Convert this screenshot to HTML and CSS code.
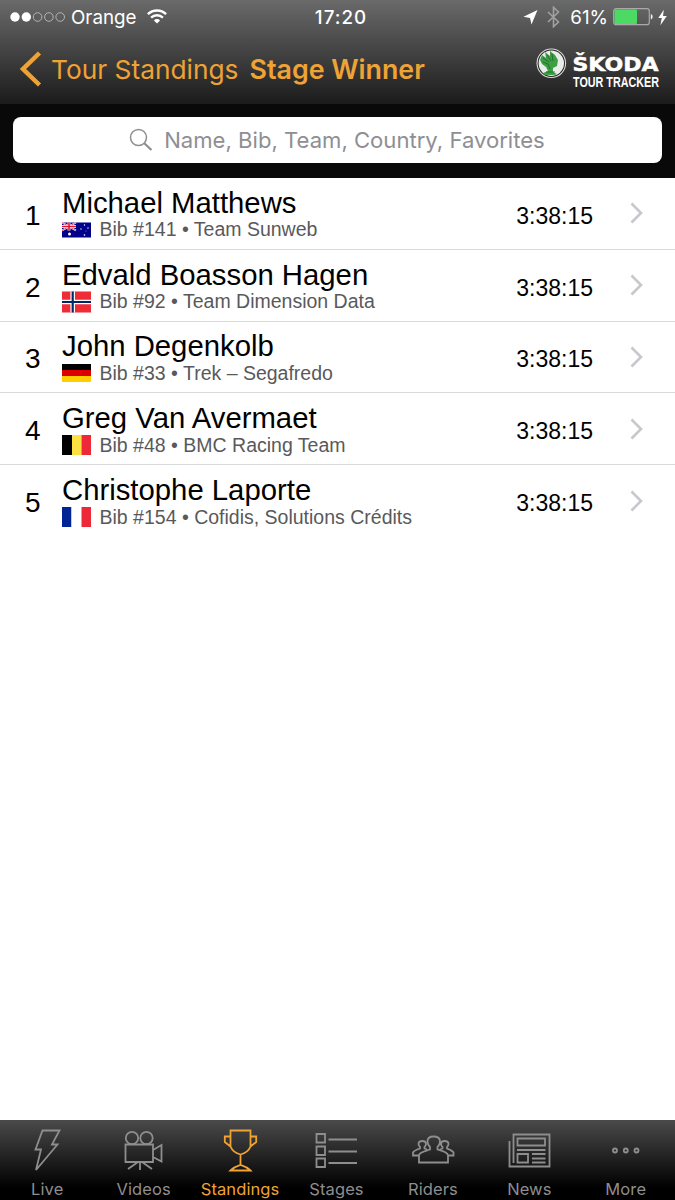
FILE: index.html
```html
<!DOCTYPE html>
<html lang="en">
<head>
    <meta charset="UTF-8">
    <meta name="viewport" content="width=device-width, initial-scale=1.0">
    <title>Stage Winner</title>
    <link rel="stylesheet" href="styles.css">
</head>
<body>
    <header>
        <div class="status-bar">
            <div class="carrier">
                <svg class="signal" width="56" height="12" viewBox="0 0 56 12">
                    <circle cx="5" cy="6" r="4.7" fill="#fff"/>
                    <circle cx="16.3" cy="6" r="4.7" fill="#fff"/>
                    <g fill="none" stroke="#bbb" stroke-width="0.9">
                        <circle cx="27.6" cy="6" r="4.3"/>
                        <circle cx="38.9" cy="6" r="4.3"/>
                        <circle cx="50.2" cy="6" r="4.3"/>
                    </g>
                </svg>
                <span>Orange</span>
                <svg class="wifi" width="20" height="15" viewBox="0 0 20 15">
                    <g fill="none" stroke="#fff" stroke-width="2.4">
                        <path d="M0.9 5.2A13 13 0 0 1 19.1 5.2"/>
                        <path d="M4.1 8.7A8.4 8.4 0 0 1 15.9 8.7"/>
                    </g>
                    <path d="M6.9 11.4A4.4 4.4 0 0 1 13.1 11.4L10 14.6z" fill="#fff"/>
                </svg>
            </div>
            <div class="clock">17:20</div>
            <div class="indicators">
                <svg width="15" height="15" viewBox="0 0 15 15"><path d="M14.5 0L8.5 14.5 7 8 .5 6.8z" fill="#fff"/></svg>
                <svg class="bluetooth" width="13" height="22" viewBox="0 0 13 22"><path d="M1 6l10.500 10L6.500 20.700V1.300L11.500 6 1 16" fill="none" stroke="#a0a0a0" stroke-width="1.6"/></svg>
                <span>61%</span>
                <svg class="battery" width="41" height="18" viewBox="0 0 41 18">
                    <rect x=".7" y=".7" width="35.6" height="16" rx="2.5" fill="none" stroke="#aaa" stroke-width="1.2"/>
                    <rect x="1.5" y="1.5" width="22.5" height="14.4" rx="1" fill="#4cd964"/>
                    <path d="M37.8 6a3 3 0 0 1 0 5.6z" fill="#eee"/>
                </svg>
                <svg class="charge" width="9" height="17" viewBox="0 0 9 17"><path d="M5.8.7L.3 9h3.5L2.4 16.2 8.8 7H5z" fill="#fff"/></svg>
            </div>
        </div>
        <nav class="nav-bar">
            <svg class="back" width="22" height="36" viewBox="0 0 22 36"><path d="M19.500 2L3 18l16.500 16" fill="none" stroke="#efa335" stroke-width="4.5"/></svg>
            <a class="back-title">Tour Standings</a>
            <h1>Stage Winner</h1>
            <svg class="logo" width="126" height="46" viewBox="0 0 126 46">
                <circle cx="15.3" cy="18.2" r="14.8" fill="#ddd"/>
                <circle cx="15.3" cy="18.2" r="13.7" fill="#222"/>
                <circle cx="15.3" cy="18.2" r="12.7" fill="#e9ece8"/>
                <path d="M4 15L6 10l4 3-1-6 5 4V6l5 4 3 5-1 6-4 2v4l4 2-3 1H9l-2-2 5-2-2-4-4-3z" fill="#3d9e44"/>
                <path d="M7 13l6 4M11 10l4 6M16 9l1 7M7 17l5 2 2 5M10 27h9" fill="none" stroke="#1f6a2b" stroke-width=".9"/>
                <text class="brand" x="36.5" y="25.5" textLength="86" lengthAdjust="spacingAndGlyphs">ŠKODA</text>
                <text class="brand-sub" transform="translate(37 42) scale(1 1.35)" textLength="86" lengthAdjust="spacingAndGlyphs">TOUR TRACKER</text>
            </svg>
        </nav>
    </header>

    <div class="search">
        <div class="search-box">
            <svg width="24" height="24" viewBox="0 0 24 24" fill="none" stroke="#8e8e93"><circle cx="9.5" cy="9.5" r="8" stroke-width="1.5"/><path d="M15 15l7.500 7" stroke-width="2.2"/></svg>
            <span>Name, Bib, Team, Country, Favorites</span>
        </div>
    </div>

    <ul class="riders">
        <li>
            <span class="rank">1</span>
            <div class="info">
                <div class="name">Michael Matthews</div>
                <div class="team">
                    <svg width="29" height="20" viewBox="0 0 29 20">
                        <rect y="2.5" width="29" height="15" fill="#00008b"/>
                        <path d="M0 2.500l14 8M14 2.500l-14 8" stroke="#fff" stroke-width="1.8"/>
                        <path d="M0 2.500l14 8M14 2.500l-14 8" stroke="#e8112d" stroke-width=".7"/>
                        <path d="M7 2.500v8M0 6.500h14" stroke="#fff" stroke-width="2.8"/>
                        <path d="M7 2.500v8M0 6.500h14" stroke="#e8112d" stroke-width="1.6"/>
                        <g fill="#fff"><circle cx="7.5" cy="14" r="1.5"/><circle cx="22.5" cy="5" r=".7"/><circle cx="19" cy="9" r=".7"/><circle cx="26" cy="8" r=".7"/><circle cx="22.5" cy="15" r=".8"/><circle cx="24" cy="11" r=".4"/></g>
                    </svg>
                    <span>Bib #141 • Team Sunweb</span>
                </div>
            </div>
            <span class="time">3:38:15</span>
            <svg class="chevron" width="14" height="22" viewBox="0 0 14 22"><path d="M1.500 1.500L11 11l-9.500 9.500"/></svg>
        </li>
        <li>
            <span class="rank">2</span>
            <div class="info">
                <div class="name">Edvald Boasson Hagen</div>
                <div class="team">
                    <svg width="29" height="22" viewBox="0 0 29 22">
                        <rect y=".5" width="29" height="21" fill="#ef2b36"/>
                        <path d="M10.700.5v21M0 11h29" stroke="#fff" stroke-width="4.6"/>
                        <path d="M10.700.5v21M0 11h29" stroke="#002868" stroke-width="2.2"/>
                    </svg>
                    <span>Bib #92 • Team Dimension Data</span>
                </div>
            </div>
            <span class="time">3:38:15</span>
            <svg class="chevron" width="14" height="22" viewBox="0 0 14 22"><path d="M1.500 1.500L11 11l-9.500 9.500"/></svg>
        </li>
        <li>
            <span class="rank">3</span>
            <div class="info">
                <div class="name">John Degenkolb</div>
                <div class="team">
                    <svg width="29" height="18" viewBox="0 0 29 18">
                        <rect width="29" height="6" fill="#000"/>
                        <rect y="6" width="29" height="6" fill="#d00"/>
                        <rect y="12" width="29" height="6" fill="#ffce00"/>
                    </svg>
                    <span>Bib #33 • Trek – Segafredo</span>
                </div>
            </div>
            <span class="time">3:38:15</span>
            <svg class="chevron" width="14" height="22" viewBox="0 0 14 22"><path d="M1.500 1.500L11 11l-9.500 9.500"/></svg>
        </li>
        <li>
            <span class="rank">4</span>
            <div class="info">
                <div class="name">Greg Van Avermaet</div>
                <div class="team">
                    <svg width="29" height="20" viewBox="0 0 29 20">
                        <rect width="10" height="20" fill="#000"/>
                        <rect x="10" width="9.5" height="20" fill="#fae042"/>
                        <rect x="19.5" width="9.5" height="20" fill="#ed2939"/>
                    </svg>
                    <span>Bib #48 • BMC Racing Team</span>
                </div>
            </div>
            <span class="time">3:38:15</span>
            <svg class="chevron" width="14" height="22" viewBox="0 0 14 22"><path d="M1.500 1.500L11 11l-9.500 9.500"/></svg>
        </li>
        <li>
            <span class="rank">5</span>
            <div class="info">
                <div class="name">Christophe Laporte</div>
                <div class="team">
                    <svg width="29" height="20" viewBox="0 0 29 20">
                        <rect width="9.5" height="20" fill="#002395"/>
                        <rect x="9.5" width="10" height="20" fill="#fff"/>
                        <rect x="19.5" width="9.5" height="20" fill="#ed2939"/>
                    </svg>
                    <span>Bib #154 • Cofidis, Solutions Crédits</span>
                </div>
            </div>
            <span class="time">3:38:15</span>
            <svg class="chevron" width="14" height="22" viewBox="0 0 14 22"><path d="M1.500 1.500L11 11l-9.500 9.500"/></svg>
        </li>
    </ul>

    <footer class="tab-bar">
        <a class="tab">
            <svg width="44" height="44" viewBox="0 0 44 44"><path d="M17.500 2.500h17L27 16.500h5.500L11 42l5-20.500h-5.500z"/></svg>
            <span>Live</span>
        </a>
        <a class="tab">
            <svg width="44" height="44" viewBox="0 0 44 44"><circle cx="10" cy="10" r="6.2"/><circle cx="24.5" cy="10" r="6.2"/><path d="M3.500 16.500H31V34H3.500zM31 22l8.500-5v16.500L31 29M16 34l-10 7M18 34v8M20 34l10 7"/></svg>
            <span>Videos</span>
        </a>
        <a class="tab active">
            <svg width="44" height="44" viewBox="0 0 44 44"><path d="M12.500 2.500h20v16c-2 5-6 7-10 8-4-1-8-3-10-8zM12.500 8.500H6.800v5.500l5.700 4.500M32.500 8.500h5.700v5.500l-5.700 4.500M22.500 26.500V37M22.500 37c-3 1-6 1.500-10 5.500h20c-4-4-7-4.500-10-5.500z"/></svg>
            <span>Standings</span>
        </a>
        <a class="tab">
            <svg width="44" height="44" viewBox="0 0 44 44"><path d="M2.500 6H11v8.500H2.500zM2.500 18.500H11V27H2.500zM2.500 30.500H11V39H2.500zM14.500 11.500H43M14.500 23.500H43M14.500 35H43"/></svg>
            <span>Stages</span>
        </a>
        <a class="tab">
            <svg width="44" height="44" viewBox="0 0 44 44"><path d="M8 34.500h29V27c-1-3-6-4-10.500-5.500V19C28.500 17 29 15 29 13.500 29 10 26.500 8.500 22.500 8.500S16.500 10 16.500 13.500c0 1.500.5 3.500 2.500 5.500v2.500C14.500 23 9 24 8 27zM8 27.500H2V24.500c1-2 4-3 7-4v-1.500c-1-1-1.500-2-1.500-3 0-2 1.500-3 4-3s3.500 1 3.500 3c0 1-.5 2-1.500 3v1.500l2.500 1M37 27.500h5.500V24.500c-1-2-4-3-6.500-4v-1.500c1-1 1.500-2 1.500-3 0-2-1.500-3-4-3s-3.500 1-3.500 3c0 1 .5 2 1.500 3v1.500l-2.500 1"/></svg>
            <span>Riders</span>
        </a>
        <a class="tab">
            <svg width="44" height="44" viewBox="0 0 44 44"><path d="M6.500 35V6.500h36v32H2.500V13M10.500 10.500H38v7H10.500zM10 22h28.500M10.500 26H21v8.500H10.500zM25 26h13.500M25 30.500h13.500M25 34.500h13.500"/></svg>
            <span>News</span>
        </a>
        <a class="tab">
            <svg width="44" height="44" viewBox="0 0 44 44"><circle cx="11" cy="22.5" r="2"/><circle cx="21.8" cy="22.5" r="2"/><circle cx="32.5" cy="22.5" r="2"/></svg>
            <span>More</span>
        </a>
    </footer>
</body>
</html>
```
FILE: styles.css
```css
* {
    box-sizing: border-box;
}

body {
    display: flex;
    flex-direction: column;
    height: 1200px;
    margin: 0;
    overflow: hidden;
    background-color: #fff;
    font-family: Inter, sans-serif;
}

svg {
    display: block;
    flex: none;
}

header {
    height: 104px;
    background: linear-gradient(#6a6a6a, #1b1b1b);
}

.status-bar {
    display: grid;
    grid-template-columns: 1fr auto 1fr;
    align-items: center;
    height: 34px;
    padding: 0 8px 0 10px;
    color: #fff;
    font-size: 18.8px;
    white-space: nowrap;
}

.carrier, .indicators {
    display: flex;
    align-items: center;
}

.signal {
    margin-right: 5px;
}

.wifi {
    margin: 0 0 2px 10px;
}

.clock {
    padding-left: 5px;
    font-weight: 500;
    letter-spacing: 1px;
}

.indicators {
    justify-content: flex-end;
}

.bluetooth {
    margin: 0 10px 0 9px;
}

.battery {
    margin-left: 5px;
}

.charge {
    margin-left: 4px;
}

.nav-bar {
    display: flex;
    align-items: center;
    height: 70px;
    padding: 0 13px 0 20px;
    color: #efa335;
    font-size: 26.3px;
    white-space: nowrap;
}

.back-title {
    margin-left: 9px;
}

h1 {
    margin: 0 0 0 11px;
    font-size: 26.8px;
    font-weight: 600;
}

.logo {
    margin: 0 0 2px auto;
    overflow: visible;
}

.brand {
    fill: #fff;
    stroke: #fff;
    stroke-width: 0.5px;
    font: 700 19px "DejaVu Sans", sans-serif;
}

.brand-sub {
    fill: #fff;
    font: 700 10.7px "Liberation Sans", sans-serif;
}

.search {
    height: 74px;
    padding: 13px;
    background-color: #090909;
}

.search-box {
    display: flex;
    align-items: center;
    justify-content: center;
    gap: 11px;
    height: 46px;
    padding: 0 1px 1px 0;
    border-radius: 8px;
    background-color: #fff;
    color: #8e8e93;
    font-size: 22.1px;
    white-space: nowrap;
}

.riders {
    flex: 1;
    margin: 0;
    padding: 0;
    list-style: none;
    font-family: "Liberation Sans", Arial, sans-serif;
}

.riders li {
    display: flex;
    align-items: center;
    height: 71.8px;
    padding: 0 31px 0 25px;
    border-bottom: 1px solid #d9d9dc;
}

.riders li:last-child {
    border-color: transparent;
}

.rank {
    width: 37px;
    padding-top: 5px;
    font-size: 28px;
}

.info {
    flex: 1;
    padding-top: 2px;
    white-space: nowrap;
}

.name {
    height: 31px;
    font-size: 29.3px;
    line-height: 32px;
}

.team {
    display: flex;
    align-items: center;
    gap: 8.5px;
    height: 24px;
    color: #59595b;
    font-size: 19.5px;
}

.time {
    padding-top: 6px;
    font-size: 23px;
}

.chevron {
    margin-left: 37px;
    fill: none;
    stroke: #c7c7cc;
    stroke-width: 2.6;
}

.tab-bar {
    display: flex;
    height: 80px;
    background: linear-gradient(#4a4a4a, #000 85%);
}

.tab {
    display: flex;
    flex: 1;
    flex-direction: column;
    align-items: center;
    padding: 8px 2px 0 0;
    color: #8e8e8e;
    font-size: 16.5px;
    letter-spacing: 0.1px;
    line-height: 34px;
}

.tab svg {
    fill: none;
    stroke: currentColor;
    stroke-width: 1.8;
}

.active {
    color: #efa335;
}
```
